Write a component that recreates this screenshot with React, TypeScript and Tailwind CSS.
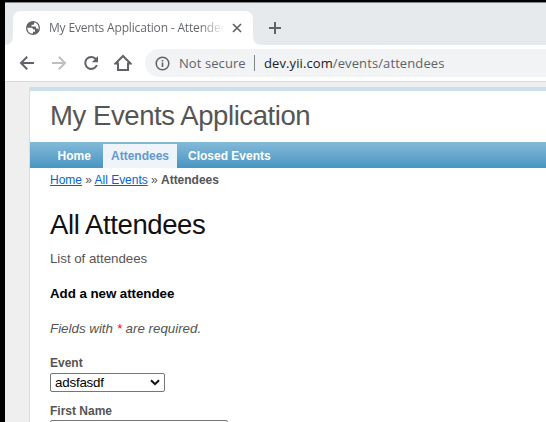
import React from "react";

function Globe() {
  return (
    <svg width="16" height="16" viewBox="0 0 16 16" className="shrink-0">
      <circle cx="8" cy="8" r="7" fill="#5f6368" />
      <path d="M2.3 7.800h4.300c1 .2 1.500.9 1.400 1.700h2v2.200H8v1.900c-3.200.1-5.700-2.200-5.700-5.800z" fill="#fff" />
      <path d="M9.200 2.300v1.200c0 .8-.5 1.300-1.200 1.300H6.500v1.700h3.300c.8 0 1.300.5 1.300 1.200v.9h1.100l1.300.8c.7-3.100-1-6.100-4.300-7.100z" fill="#fff" />
    </svg>
  );
}

function Toolbar() {
  return (
    <div className="flex h-[37px] shrink-0 items-center border-b border-[#d7d9d9] bg-white pl-[14px]">
      <svg width="16" height="16" viewBox="0 0 16 16" fill="none" stroke="#5f6368" strokeWidth="2" className="shrink-0">
        <path d="M15 8H2.500M8.200 1.800 2 8l6.200 6.200" />
      </svg>
      <svg width="16" height="16" viewBox="0 0 16 16" fill="none" stroke="#bdbfc1" strokeWidth="2" className="ml-4 shrink-0">
        <path d="M1 8h12.500M7.800 1.800 14 8l-6.200 6.200" />
      </svg>
      <svg width="16" height="16" viewBox="0 0 16 16" fill="none" className="ml-4 shrink-0">
        <path d="M13 4.200A6 6 0 1 0 13.900 10" stroke="#5f6368" strokeWidth="2" />
        <path d="M15 1v6.200H8.800z" fill="#5f6368" />
      </svg>
      <svg width="18" height="18" viewBox="0 0 18 18" fill="none" stroke="#5f6368" strokeWidth="2" className="ml-[15px] shrink-0">
        <path d="M1.500 9.500H4V16h10V9.500h2.500L9 2z" />
      </svg>
      <div className="ml-[13px] flex h-7 grow items-center rounded-l-full bg-[#f1f3f4] pl-[10px] font-['Open_Sans',sans-serif] text-[13px] whitespace-nowrap text-[#5f6368]">
        <svg width="15" height="15" viewBox="0 0 15 15" className="shrink-0">
          <circle cx="7.500" cy="7.500" r="6.300" fill="none" stroke="#5f6368" strokeWidth="1.500" />
          <path d="M6.700 6.500h1.600V11H6.700zM6.700 3.900h1.600v1.500H6.700z" fill="#5f6368" />
        </svg>
        <span className="mt-px ml-[9px] w-[67px] tracking-[0.08px]">Not secure</span>
        <span className="ml-[8px] h-4 w-px bg-[#80868b]" />
        <span className="mt-px ml-[9px] tracking-[0.100px]"><span className="text-[#202124]">dev.yii.com</span>/events/attendees</span>
      </div>
    </div>
  );
}

export default function App() {
  return (
    <div className="h-[422px] w-[546px] overflow-hidden bg-black pt-[2px] pl-[5px]">
      <div className="flex h-[420px] flex-col border-t border-[#85888a] bg-[#efefef]">
        <div className="flex h-[42px] shrink-0 bg-[#e6eaed] pt-2">
          <div className="flex w-2 items-end bg-linear-to-b from-[#e6eaed] from-50% to-white to-50%">
            <div className="h-full w-full rounded-br-lg bg-[#e6eaed]" />
          </div>
          <div className="flex w-[240px] items-center rounded-t-lg bg-white pl-3">
            <Globe />
            <span className="ml-[8px] w-[177px] overflow-hidden bg-linear-to-r from-[#5f6368] from-85% to-transparent to-99% bg-clip-text font-['Open_Sans',sans-serif] text-[12px] tracking-[-0.170px] whitespace-nowrap text-transparent">
              My Events Application - Attendee
            </span>
            <svg width="10" height="10" viewBox="0 0 10 10" stroke="#5f6368" strokeWidth="1.700" className="ml-[6px] shrink-0"><path d="m1 1 8 8M9 1 1 9" /></svg>
          </div>
          <div className="w-2 bg-linear-to-b from-[#e6eaed] from-50% to-white to-50%"><div className="h-full rounded-bl-lg bg-[#e6eaed]" /></div>
          <svg width="12" height="12" viewBox="0 0 12 12" stroke="#5f6368" strokeWidth="2" className="mt-[11px] ml-[8px]"><path d="M6 0v12M0 6h12" /></svg>
        </div>
        <Toolbar />
        <div className="mt-[5px] ml-[24px] grow overflow-hidden border-t-4 border-l border-[#c9e0ed] bg-white font-['Liberation_Sans',Arial,sans-serif] text-[#555]">
          <div className="h-[51px] pt-[9px] pl-5 text-[27.500px] leading-[32px] tracking-[-0.420px] whitespace-nowrap">My Events Application</div>
          <nav className="flex h-[26px] items-end bg-linear-to-b from-[#84bad8] to-[#4895c2] pl-5 text-[12px] leading-6 font-bold text-white">
            <span className="w-[53px] pl-[7.500px]">Home</span>
            <span className="w-[74px] bg-[#eff4fa] text-center text-[#6399cd]">Attendees</span>
            <span className="pl-[11px]">Closed Events</span>
          </nav>
          <div className="pl-5">
            <div className="h-6 text-[12px] leading-6 tracking-[-0.020px]">
              <a className="text-[#06c] underline">Home</a> » <a className="text-[#06c] underline">All Events</a> » <b>Attendees</b>
            </div>
            <h1 className="mt-[17px] text-[27.500px] leading-8 tracking-[-0.400px] text-[#111]">All Attendees</h1>
            <p className="mt-[8px] text-[13.330px] leading-5 tracking-[-0.040px]">List of attendees</p>
            <h2 className="mt-[15px] text-[13.330px] leading-5 font-bold tracking-[-0.050px] text-black">Add a new attendee</h2>
            <p className="mt-[15px] text-[13.330px] leading-5 italic">Fields with <span className="text-[#f00]">*</span> are required.</p>
            <div className="mt-[16px] text-[12px] leading-4 font-bold">Event</div>
            <div className="mt-[2px] flex h-[19px] w-[115px] items-center justify-between rounded-[2px] border border-[#767676] pr-[4px] pl-1 text-[13.330px] tracking-[-0.200px] text-black">
              adsfasdf
              <svg width="10" height="7" viewBox="0 0 10 7" fill="none" stroke="#111" strokeWidth="2"><path d="m1 1.200 4 4 4-4" /></svg>
            </div>
            <div className="mt-[11px] text-[12px] leading-4 font-bold">First Name</div>
            <div className="mt-[1px] h-5 w-[178px] rounded-[2px] border border-[#767676]" />
          </div>
        </div>
      </div>
    </div>
  );
}
